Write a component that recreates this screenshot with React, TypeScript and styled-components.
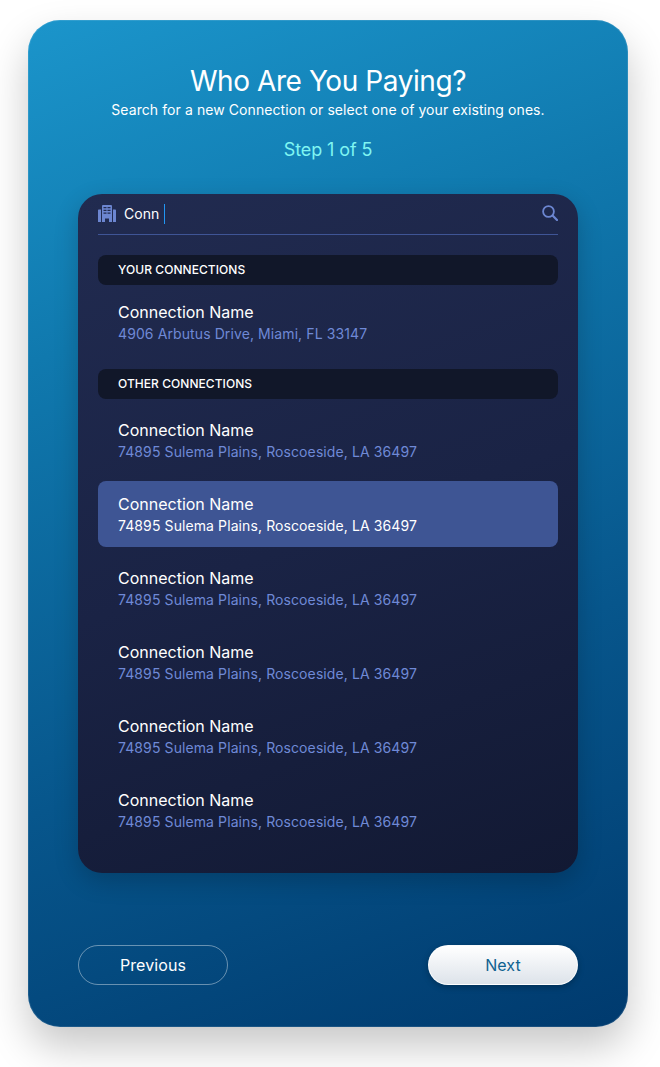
import React from "react";
import styled, { createGlobalStyle } from "styled-components";

const GlobalStyle = createGlobalStyle`
  html, body {
    margin: 0;
    padding: 0;
    background: #fff;
    font-family: "Inter", "Liberation Sans", sans-serif;
  }
`;

const Page = styled.div`
  width: 660px;
  height: 1067px;
  padding: 20px 32px 40px 28px;
  box-sizing: border-box;
  overflow: hidden;
`;

const Card = styled.div`
  width: 600px;
  height: 1007px;
  box-sizing: border-box;
  padding: 44px 50px 42px;
  border-radius: 32px;
  background: linear-gradient(160deg, #1b95cb 0%, #1079ae 28%, #07568c 65%, #003a6e 100%);
  box-shadow: 0 20px 40px rgba(0, 0, 0, 0.22), inset 0 0 0 1px rgba(255, 255, 255, 0.1);
  display: flex;
  flex-direction: column;
`;

const Title = styled.h1`
  margin: 0;
  font-size: 28px;
  line-height: 34px;
  font-weight: 400;
  letter-spacing: -0.42px;
  color: #fff;
  text-align: center;
`;

const Subtitle = styled.p`
  margin: 2px 0 0;
  font-size: 14px;
  line-height: 20px;
  letter-spacing: 0.08px;
  color: #fff;
  text-align: center;
`;

const Step = styled.div`
  margin-top: 18px;
  font-size: 18px;
  line-height: 24px;
  letter-spacing: -0.1px;
  color: #7ff5f2;
  text-align: center;
`;

const Panel = styled.div`
  margin-top: 32px;
  height: 679px;
  box-sizing: border-box;
  padding: 0 20px;
  border-radius: 24px;
  background: linear-gradient(160deg, #212b50 0%, #1a2345 50%, #121933 100%);
  box-shadow: 0 8px 24px rgba(0, 0, 0, 0.2);
`;

const SearchRow = styled.div`
  height: 41px;
  box-sizing: border-box;
  display: flex;
  align-items: center;
  border-bottom: 1px solid #3f5596;
  padding-bottom: 1px;
`;

const SearchText = styled.span`
  flex: 0 0 36px;
  margin-left: 8px;
  font-size: 14px;
  letter-spacing: 0.05px;
  color: #fff;
`;

const Caret = styled.span`
  width: 1px;
  height: 20px;
  margin-left: 4px;
  background: #2196f3;
`;

const SearchIcon = styled.svg`
  margin-left: auto;
  margin-bottom: 2px;
  display: block;
`;

const SectionHeader = styled.div<{ $top: number }>`
  margin-top: ${(p) => p.$top}px;
  height: 30px;
  padding-left: 20px;
  border-radius: 8px;
  background: #111729;
  color: #fff;
  font-size: 12px;
  font-weight: 500;
  letter-spacing: 0.06px;
  line-height: 30px;
  text-transform: uppercase;
`;

const ItemList = styled.div<{ $top: number }>`
  margin-top: ${(p) => p.$top}px;
  display: flex;
  flex-direction: column;
  gap: 8px;
`;

const Item = styled.div<{ $selected?: boolean }>`
  height: 66px;
  box-sizing: border-box;
  padding: 12px 20px;
  border-radius: 8px;
  background: ${(p) => (p.$selected ? "#3e5594" : "transparent")};
`;

const ItemName = styled.div`
  font-size: 16px;
  line-height: 22px;
  color: #fff;
`;

const ItemAddress = styled.div<{ $selected?: boolean }>`
  font-size: 14px;
  line-height: 22px;
  letter-spacing: 0.1px;
  color: ${(p) => (p.$selected ? "#fff" : "#6f89d6")};
`;

const Footer = styled.div`
  margin-top: auto;
  display: flex;
  justify-content: space-between;
`;

const OutlineButton = styled.button`
  width: 150px;
  height: 40px;
  border-radius: 20px;
  border: 1px solid rgba(255, 255, 255, 0.4);
  background: transparent;
  color: #fff;
  font-family: inherit;
  font-size: 16px;
  letter-spacing: 0.1px;
  padding: 0;
`;

const SolidButton = styled.button`
  width: 150px;
  height: 40px;
  border-radius: 20px;
  border: 1px solid rgba(255, 255, 255, 0.8);
  background: linear-gradient(180deg, #ffffff 0%, #dde3ea 100%);
  box-shadow: 0 2px 6px rgba(0, 0, 0, 0.25);
  color: #0f6290;
  font-family: inherit;
  font-size: 16px;
  letter-spacing: 0.1px;
  padding: 0;
`;

const BuildingIcon = () => (
  <svg width="18" height="17" viewBox="0 0 18 17" fill="#6c86d1">
    <path d="M4 1.200C4 .5 4.500 0 5.200 0h7.600c.7 0 1.200.5 1.200 1.200V17h-3v-3.500H7V17H4V1.200z" />
    <path d="M0 5.500C0 4.900.4 4.500 1 4.500h2V17H0V5.500zM15 4.500h2c.6 0 1 .4 1 1V17h-3V4.500z" />
    <path d="M5.500 2h3v1.300h-3zM9.500 2h3v1.300h-3zM5.500 4.700h3v1.300h-3zM9.500 4.700h3v1.300h-3zM5.500 7.400h3v1.300h-3zM9.500 7.400h3v1.300h-3z" fill="#212b50" />
  </svg>
);

const otherAddress = "74895 Sulema Plains, Roscoeside, LA 36497";
const others = [false, true, false, false, false, false];

const App = () => {
  return (
    <Page>
      <GlobalStyle />
      <Card>
        <Title>Who Are You Paying?</Title>
        <Subtitle>Search for a new Connection or select one of your existing ones.</Subtitle>
        <Step>Step 1 of 5</Step>
        <Panel>
          <SearchRow>
            <BuildingIcon />
            <SearchText>Conn</SearchText>
            <Caret />
            <SearchIcon width="16" height="16" viewBox="0 0 16 16" fill="none" stroke="#6c86d1">
              <circle cx="6.500" cy="6.500" r="5.400" strokeWidth="1.800" />
              <path d="M10.800 10.800l4.200 4.200" strokeWidth="2.200" strokeLinecap="round" />
            </SearchIcon>
          </SearchRow>
          <SectionHeader $top={20}>Your Connections</SectionHeader>
          <ItemList $top={4}>
            <Item>
              <ItemName>Connection Name</ItemName>
              <ItemAddress>4906 Arbutus Drive, Miami, FL 33147</ItemAddress>
            </Item>
          </ItemList>
          <SectionHeader $top={14}>Other Connections</SectionHeader>
          <ItemList $top={8}>
            {others.map((selected, i) => (
              <Item key={i} $selected={selected}>
                <ItemName>Connection Name</ItemName>
                <ItemAddress $selected={selected}>{otherAddress}</ItemAddress>
              </Item>
            ))}
          </ItemList>
        </Panel>
        <Footer>
          <OutlineButton>Previous</OutlineButton>
          <SolidButton>Next</SolidButton>
        </Footer>
      </Card>
    </Page>
  );
};

export default App;
